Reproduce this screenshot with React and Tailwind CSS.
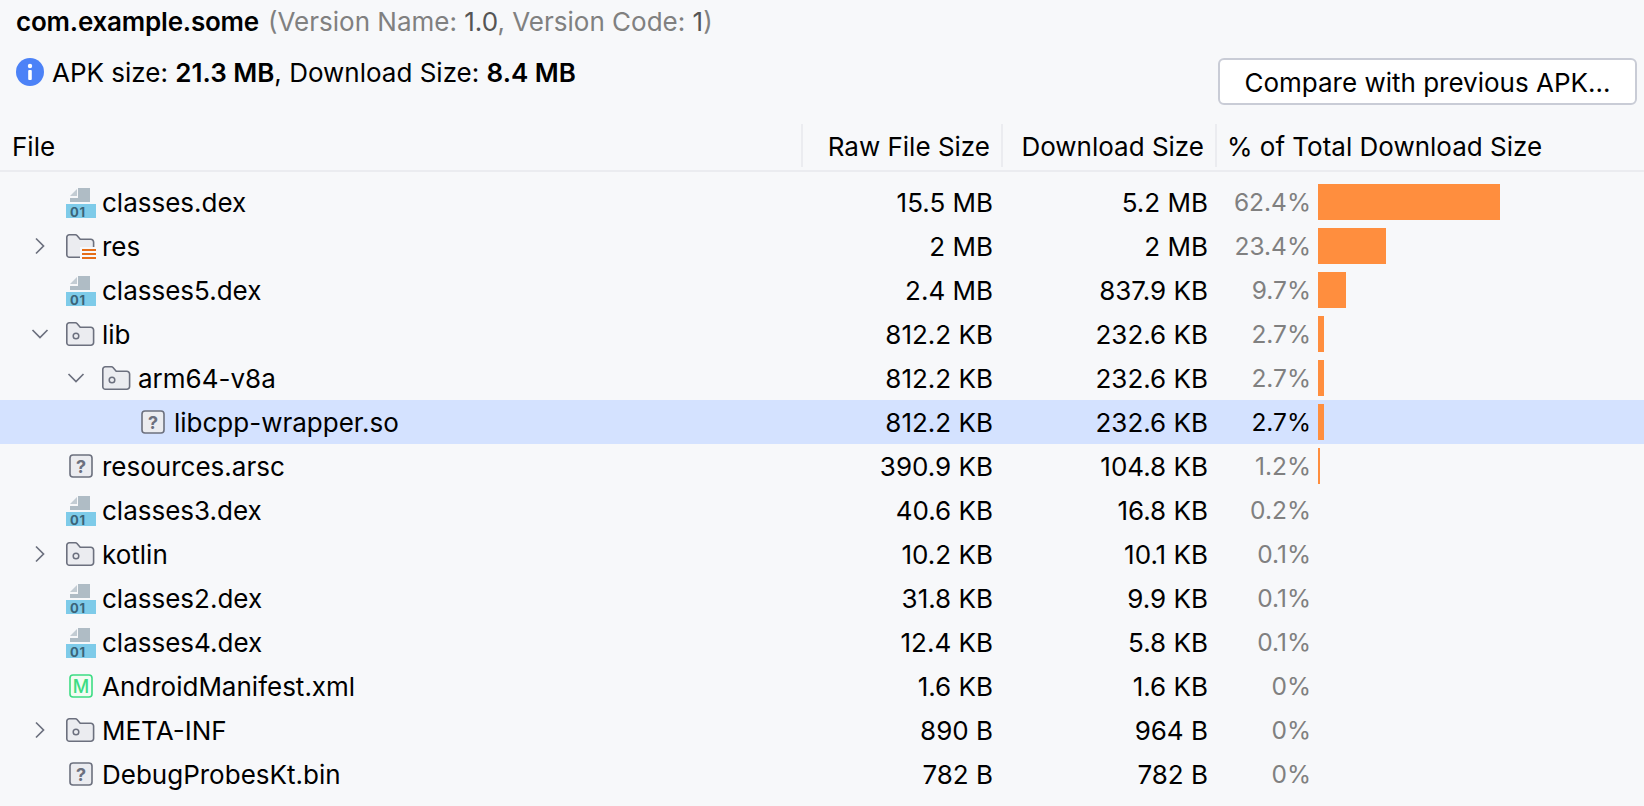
const FONT = "font-['Inter','Liberation_Sans',sans-serif]";

function Chevron({ open }) {
  return (
    <svg width="20" height="20" viewBox="0 0 20 20" fill="none" stroke="#6c707e" strokeWidth="1.7" className="shrink-0">
      {open ? <path d="M2.500 6 10 13.500 17.500 6" /> : <path d="M6 2.500 13.500 10 6 17.500" />}
    </svg>
  );
}
function DexIcon() {
  return (
    <svg width="30" height="32" viewBox="0 0 30 32" className="shrink-0">
      <path d="M4 10 11 3v7z" fill="#c3ccd3" />
      <path d="M12 2h12v14H4v-4h8z" fill="#afbcc5" />
      <rect x="0" y="18" width="30" height="14" fill="#7ecbe9" />
      <text x="4" y="30.500" fontSize="13" fontWeight="700" fill="#3b6478" fontFamily="Inter" letterSpacing="0.8">01</text>
    </svg>
  );
}
function FolderIcon({ res }) {
  return (
    <svg width="30" height="28" viewBox="0 0 30 28" fill="none" className="shrink-0">
      <path d="M.8 5.300a2.500 2.500 0 0 1 2.500-2.500h6.200a2 2 0 0 1 1.500.7l3.200 3.800h10.600a2.800 2.800 0 0 1 2.800 2.800v12.300a2.800 2.800 0 0 1-2.800 2.800H3.300a2.500 2.500 0 0 1-2.500-2.500z" fill="#ebecf0" stroke="#6c707e" strokeWidth="1.6" />
      {res ? (
        <g>
          <rect x="14" y="15" width="16" height="13" fill="#f7f8fa" />
          <path d="M16 18h14M16 22h14M16 26h14" stroke="#e66d17" strokeWidth="2" />
        </g>
      ) : (
        <circle cx="10" cy="16" r="2.800" fill="none" stroke="#6c707e" strokeWidth="1.500" />
      )}
    </svg>
  );
}
function FileQ() {
  return (
    <svg width="24" height="24" viewBox="0 0 24 24" fill="none" className="shrink-0">
      <rect x="1" y="1" width="22" height="22" rx="3" fill="#ebecf0" stroke="#6c707e" strokeWidth="1.600" />
      <text x="12" y="18.500" textAnchor="middle" fontSize="18" fontWeight="700" fill="#6c707e" fontFamily="Inter">?</text>
    </svg>
  );
}
function ManifestIcon() {
  return (
    <svg width="24" height="24" viewBox="0 0 24 24" fill="none" className="shrink-0">
      <rect x="1" y="1" width="22" height="22" rx="3" fill="#f2fcf3" stroke="#3ddc84" strokeWidth="1.600" />
      <text x="12" y="18.500" textAnchor="middle" fontSize="18" fontWeight="500" fill="#3ddc84" fontFamily="Inter">M</text>
    </svg>
  );
}

const rows = [
  { n: "classes.dex", d: 0, i: "dex", r: "15.5 MB", s: "5.2 MB", p: "62.4%", b: 182 },
  { n: "res", d: 0, i: "res", c: "closed", r: "2 MB", s: "2 MB", p: "23.4%", b: 68 },
  { n: "classes5.dex", d: 0, i: "dex", r: "2.4 MB", s: "837.9 KB", p: "9.7%", b: 28 },
  { n: "lib", d: 0, i: "folder", c: "open", r: "812.2 KB", s: "232.6 KB", p: "2.7%", b: 6 },
  { n: "arm64-v8a", d: 1, i: "folder", c: "open", r: "812.2 KB", s: "232.6 KB", p: "2.7%", b: 6 },
  { n: "libcpp-wrapper.so", d: 2, i: "q", r: "812.2 KB", s: "232.6 KB", p: "2.7%", b: 6, sel: true },
  { n: "resources.arsc", d: 0, i: "q", r: "390.9 KB", s: "104.8 KB", p: "1.2%", b: 2 },
  { n: "classes3.dex", d: 0, i: "dex", r: "40.6 KB", s: "16.8 KB", p: "0.2%", b: 0 },
  { n: "kotlin", d: 0, i: "folder", c: "closed", r: "10.2 KB", s: "10.1 KB", p: "0.1%", b: 0 },
  { n: "classes2.dex", d: 0, i: "dex", r: "31.8 KB", s: "9.9 KB", p: "0.1%", b: 0 },
  { n: "classes4.dex", d: 0, i: "dex", r: "12.4 KB", s: "5.8 KB", p: "0.1%", b: 0 },
  { n: "AndroidManifest.xml", d: 0, i: "m", r: "1.6 KB", s: "1.6 KB", p: "0%", b: 0 },
  { n: "META-INF", d: 0, i: "folder", c: "closed", r: "890 B", s: "964 B", p: "0%", b: 0 },
  { n: "DebugProbesKt.bin", d: 0, i: "q", r: "782 B", s: "782 B", p: "0%", b: 0 },
];

function Icon({ i }) {
  if (i === "dex") return <DexIcon />;
  if (i === "res") return <FolderIcon res />;
  if (i === "folder") return <FolderIcon />;
  if (i === "m") return <ManifestIcon />;
  return <FileQ />;
}

const indents = ["pl-[30px]", "pl-[66px]", "pl-[102px]"];

export default function App() {
  return (
    <div className={`${FONT} flex h-[806px] w-[1644px] flex-col overflow-hidden bg-[#f7f8fa] text-[26px] text-black`}>
      <div className="flex h-[124px] justify-between">
        <div className="flex flex-col pl-4">
          <div className="flex h-[42px] items-center whitespace-nowrap">
            <span className="font-semibold tracking-[-0.2px]">com.example.some</span>
            <span className="ml-[9px] text-[#808080]">(Version Name: <span className="text-[#555555]">1.0</span>, Version Code: <span className="text-[#555555]">1</span>)</span>
          </div>
          <div className="mt-[10px] flex h-[40px] items-center whitespace-nowrap">
            <svg width="28" height="28" viewBox="0 0 28 28" className="mr-[8px] shrink-0">
              <circle cx="14" cy="14" r="14" fill="#4c82f7" />
              <circle cx="14" cy="8" r="2.200" fill="#fff" />
              <rect x="12.200" y="12" width="3.600" height="10" rx="1" fill="#fff" />
            </svg>
            <span>APK size: <b className="font-semibold">21.3 MB</b>, Download Size: <b className="font-semibold">8.4 MB</b></span>
          </div>
        </div>
        <button className="mr-[7px] mt-[58px] h-[47px] w-[419px] whitespace-nowrap rounded-[6px] border-2 border-[#c9ccd6] bg-white pt-[2px] text-[26px]">Compare with previous APK...</button>
      </div>

      <div className="flex h-[48px] items-start border-b-2 border-[#ebecf0]">
        <div className="flex h-[43px] w-[803px] items-center border-r-2 border-[#ebecf0] pl-3 pt-px">File</div>
        <div className="flex h-[43px] w-[200px] items-center justify-end border-r-2 border-[#ebecf0] pr-[11px] pt-px">Raw File Size</div>
        <div className="flex h-[43px] w-[214px] items-center justify-end border-r-2 border-[#ebecf0] pr-[11px] pt-px">Download Size</div>
        <div className="flex h-[43px] items-center whitespace-nowrap pl-[10px] pt-px">% of Total Download Size</div>
      </div>

      <div className="mt-[8px] flex flex-col">
        {rows.map((r) => (
          <div key={r.n} className={`flex h-[44px] items-center ${r.sel ? "bg-[#d4e2ff]" : ""}`}>
            <div className={`flex w-[803px] items-center ${indents[r.d]}`}>
              <div className="flex w-[20px] shrink-0 justify-center">{r.c ? <Chevron open={r.c === "open"} /> : null}</div>
              <div className="ml-[16px] flex w-[30px] shrink-0 items-center justify-center"><Icon i={r.i} /></div>
              <span className="ml-[6px] whitespace-nowrap">{r.n}</span>
            </div>
            <div className="w-[190px] text-right">{r.r}</div>
            <div className="w-[215px] text-right">{r.s}</div>
            <div className={`w-[103px] text-right text-[24.5px] ${r.sel ? "text-black" : "text-[#808080]"}`}>{r.p}</div>
            <div className="ml-[7px] flex h-[36px] items-center">
              {r.b > 0 ? <div className="h-[36px] bg-[#ff8e3e]" style={{ width: r.b }} /> : null}
            </div>
          </div>
        ))}
      </div>
    </div>
  );
}
